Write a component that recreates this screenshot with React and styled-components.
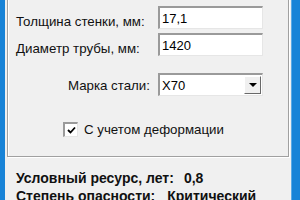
import React from 'react';
import styled, { createGlobalStyle } from 'styled-components';

const Global = createGlobalStyle`
  html, body {
    margin: 0;
    padding: 0;
    width: 300px;
    height: 200px;
    overflow: hidden;
    background: #f0f0f0;
  }
`;

const Frame = styled.div`
  width: 300px;
  height: 200px;
  display: flex;
  background: #f0f0f0;
  font-family: 'Liberation Sans', Arial, sans-serif;
  color: #000;
  overflow: hidden;
`;

const Edge = styled.div`
  width: ${props => props.w}px;
  flex: none;
  background: #1883d7;
  border-left: ${props => (props.light ? '1px solid #5aa9e6' : 'none')};
`;

const Body = styled.div`
  flex: 1;
  display: flex;
  flex-direction: column;
  padding: 0 2px 0 2px;
`;

const Group = styled.div`
  height: 167px;
  flex: none;
  box-sizing: border-box;
  margin-top: -10px;
  border: 1px solid #a0a0a0;
  box-shadow: inset 1px 1px 0 #fff, 1px 1px 0 #fff;
  padding: 15px 0 0 0;
  display: flex;
  flex-direction: column;
`;

const Row = styled.div`
  display: flex;
  align-items: flex-start;
  height: ${props => props.h}px;
`;

const Label = styled.div`
  width: 134px;
  padding-left: 8px;
  flex: none;
  text-align: ${props => props.align};
  font-size: 13.3px;
  margin-top: ${props => props.top}px;
  color: #111;
  white-space: nowrap;
`;

const Field = styled.div`
  margin-left: 8px;
  width: 105px;
  height: 23px;
  box-sizing: border-box;
  background: #fff;
  border-top: 2px solid #9a9a9a;
  border-left: 2px solid #9a9a9a;
  border-right: 1px solid #e6e6e6;
  border-bottom: 1px solid #e6e6e6;
  display: flex;
  align-items: center;
  font-size: 13px;
  padding-left: 2px;
`;

const FieldText = styled.span`
  flex: 1;
`;

const DropButton = styled.div`
  width: 17px;
  height: 18px;
  margin-right: 1px;
  box-sizing: border-box;
  background: #f0f0f0;
  border-top: 1px solid #fff;
  border-left: 1px solid #fff;
  border-right: 1px solid #696969;
  border-bottom: 1px solid #696969;
  display: flex;
  align-items: center;
  justify-content: center;
`;

const Arrow = styled.div`
  width: 0;
  height: 0;
  border-left: 4px solid transparent;
  border-right: 4px solid transparent;
  border-top: 4px solid #000;
`;

const CheckRow = styled.div`
  display: flex;
  align-items: center;
  margin-top: 26px;
  padding-left: 55px;
`;

const CheckBox = styled.div`
  width: 15px;
  height: 15px;
  box-sizing: border-box;
  background: #fff;
  border-top: 2px solid #9a9a9a;
  border-left: 2px solid #9a9a9a;
  border-right: 1px solid #e6e6e6;
  border-bottom: 1px solid #e6e6e6;
  display: flex;
  align-items: center;
  justify-content: center;
`;

const CheckLabel = styled.span`
  margin-left: 6px;
  font-size: 13.3px;
  color: #111;
`;

const Results = styled.div`
  padding: 12px 0 0 9px;
  display: flex;
  flex-direction: column;
`;

const ResultLine = styled.div`
  font-size: 14px;
  font-weight: bold;
  line-height: 18px;
  white-space: nowrap;
  color: #111;
`;

const Value = styled.span`
  margin-left: ${props => props.gap}px;
`;

export default function App() {
  return (
    <Frame>
      <Global />
      <Edge w={5} />
      <Body>
        <Group>
          <Row h={27}>
            <Label top={8} align="left">Толщина стенки, мм:</Label>
            <Field><FieldText>17,1</FieldText></Field>
          </Row>
          <Row h={40}>
            <Label top={8} align="left">Диаметр трубы, мм:</Label>
            <Field><FieldText>1420</FieldText></Field>
          </Row>
          <Row h={23}>
            <Label top={5} align="right">Марка стали:</Label>
            <Field>
              <FieldText>X70</FieldText>
              <DropButton><Arrow /></DropButton>
            </Field>
          </Row>
          <CheckRow>
            <CheckBox>
              <svg width="9" height="8" viewBox="0 0 9 8">
                <path d="M1 4 L3.5 6.5 L8 1.5" fill="none" stroke="#000" strokeWidth="1.8" />
              </svg>
            </CheckBox>
            <CheckLabel>С учетом деформации</CheckLabel>
          </CheckRow>
        </Group>
        <Results>
          <ResultLine>
            Условный ресурс, лет:<Value gap={10}>0,8</Value>
          </ResultLine>
          <ResultLine>
            Степень опасности:<Value gap={12}>Критический</Value>
          </ResultLine>
        </Results>
      </Body>
      <Edge w={8} light />
    </Frame>
  );
}
